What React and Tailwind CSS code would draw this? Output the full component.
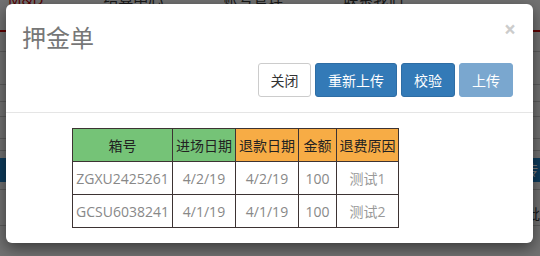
import React from "react";

const font = { fontFamily: '"Open Sans", "Noto Sans CJK SC", sans-serif' };

const rows = [
  { box: "ZGXU2425261", inDate: "4/2/19", refund: "4/2/19", amount: "100", reason: "测试1" },
  { box: "GCSU6038241", inDate: "4/1/19", refund: "4/1/19", amount: "100", reason: "测试2" },
];

function BackgroundPage() {
  return (
    <div className="w-[540px] h-[256px] bg-[#e4e4e4] overflow-hidden">
      <div className="h-[41px]">
        <div className="flex items-start gap-[60px] pl-[8px] -mt-[11px] text-[15px] leading-[20px] text-[#333]">
          <span className="text-[#b00000]">M&amp;D</span>
          <span>结算中心</span>
          <span>账号管理</span>
          <span>联系我们</span>
        </div>
      </div>
      <div className="h-[2px] bg-[#c00000]" />
      <div className="h-[20px] border-b border-[#b8b8b8]" />
      <div className="h-[33px] border-b border-[#b8b8b8]" />
      <div className="h-[17px] border-b border-[#b8b8b8]" />
      <div className="h-[15px] border-b border-[#b8b8b8]" />
      <div className="h-[22px] border-b border-[#b8b8b8]" />
      <div className="h-[12px] border-b border-[#b8b8b8]" />
      <div className="h-[7px]" />
      <div className="h-[24px] bg-[#1a78b8] flex justify-end pr-[2px] text-white text-[14px] leading-[24px]">传</div>
      <div className="h-[8px] border-b border-[#b8b8b8]" />
      <div className="h-[36px] border-b border-[#b8b8b8] flex justify-end text-[14px] leading-[20px] text-[#333]">
        <span className="pt-[14px]">批</span>
      </div>
    </div>
  );
}

export default function App() {
  return (
    <div className="relative w-[540px] h-[256px] overflow-hidden" style={font}>
      <BackgroundPage />
      <div className="absolute inset-0 bg-black/50" />
      <div className="absolute left-[6px] top-[4px] w-[527px] h-[239px] bg-white rounded-[6px] shadow-[0_5px_15px_rgba(0,0,0,0.5)] flex flex-col">
        <div className="relative px-[16px] pt-[16px] pb-[15px] border-b border-[#e5e5e5]">
          <div className="text-[24px] leading-[36px] text-[#777]">押金单</div>
          <button className="absolute right-[17px] top-[15px] text-[21px] font-bold leading-[21px] text-[#ccc]">×</button>
          <div className="flex justify-end gap-[4px] mt-[7px] pr-[4px]">
            <button className="h-[34px] w-[53px] border border-[#ccc] rounded-[3px] bg-white text-[14px] text-[#333]">关闭</button>
            <button className="h-[34px] w-[82px] border border-[#2e6da4] rounded-[3px] bg-[#337ab7] text-[14px] text-white">重新上传</button>
            <button className="h-[34px] w-[54px] border border-[#2e6da4] rounded-[3px] bg-[#337ab7] text-[14px] text-white">校验</button>
            <button className="h-[34px] w-[54px] border border-[#7aa7cf] rounded-[3px] bg-[#7aa7cf] text-[14px] text-white">上传</button>
          </div>
        </div>
        <div className="pl-[66px] pt-[15px]">
          <table className="border-collapse text-[14px] text-center">
            <thead>
              <tr className="h-[33px] text-[#222]">
                <th className="w-[100px] font-normal border border-[#3d3333] bg-[#75c377]">箱号</th>
                <th className="w-[63px] font-normal border border-[#3d3333] bg-[#75c377]">进场日期</th>
                <th className="w-[63px] font-normal border border-[#3d3333] bg-[#f7ac45]">退款日期</th>
                <th className="w-[38px] font-normal border border-[#3d3333] bg-[#f7ac45]">金额</th>
                <th className="w-[62px] font-normal border border-[#3d3333] bg-[#f7ac45]">退费原因</th>
              </tr>
            </thead>
            <tbody>
              {rows.map((r) => (
                <tr key={r.box} className="h-[33px] text-[#888]">
                  <td className="border border-[#3d3333]">{r.box}</td>
                  <td className="border border-[#3d3333]">{r.inDate}</td>
                  <td className="border border-[#3d3333]">{r.refund}</td>
                  <td className="border border-[#3d3333]">{r.amount}</td>
                  <td className="border border-[#3d3333] text-[#999]">{r.reason}</td>
                </tr>
              ))}
            </tbody>
          </table>
        </div>
      </div>
    </div>
  );
}
